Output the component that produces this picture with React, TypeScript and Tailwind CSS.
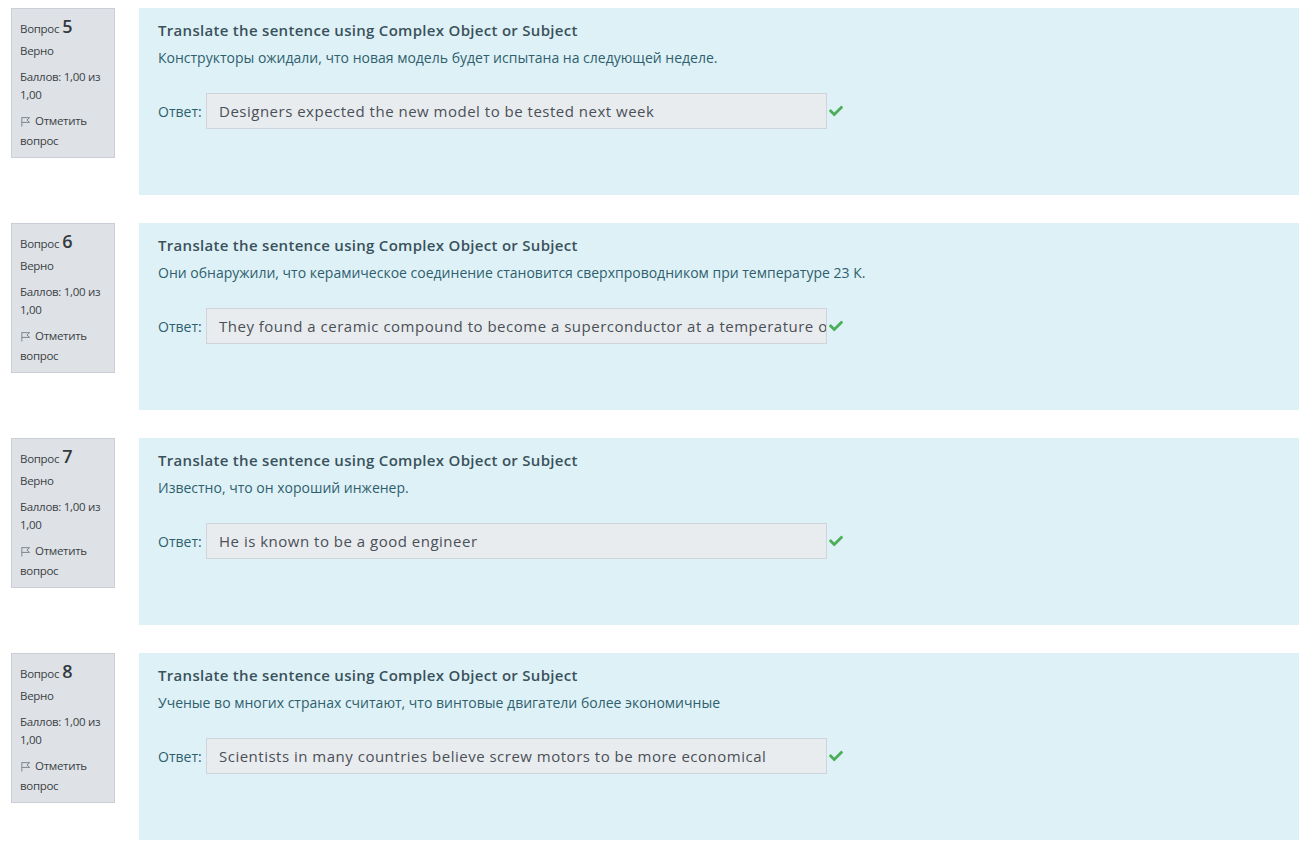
import { FaCheck } from "react-icons/fa";

type Q = { num: number; text: string; answer: string };

const questions: Q[] = [
  {
    num: 5,
    text: "Конструкторы ожидали, что новая модель будет испытана на следующей неделе.",
    answer: "Designers expected the new model to be tested next week",
  },
  {
    num: 6,
    text: "Они обнаружили, что керамическое соединение становится сверхпроводником при температуре 23 К.",
    answer: "They found a ceramic compound to become a superconductor at a temperature of 23 K",
  },
  {
    num: 7,
    text: "Известно, что он хороший инженер.",
    answer: "He is known to be a good engineer",
  },
  {
    num: 8,
    text: "Ученые во многих странах считают, что винтовые двигатели более экономичные",
    answer: "Scientists in many countries believe screw motors to be more economical",
  },
];

function FlagIcon() {
  return (
    <svg viewBox="0 0 12 12" className="h-[11px] w-[11px] text-[#6b7379]" fill="none" stroke="currentColor" strokeWidth="0.9">
      <path d="M2 1.5v10" />
      <path d="M2 1.8h8.5l-3 2.6 3 2.6H2" />
    </svg>
  );
}

function Question({ q }: { q: Q }) {
  return (
    <div className="flex gap-[24px] pl-[11px] pb-[28px]">
      {/* Info */}
      <div className="w-[104px] shrink-0 self-start border border-[#c9cfd4] bg-[#dee2e6] px-[8px] pt-[5px] pb-[7px] text-[11.5px] leading-[18px] tracking-[-0.3px] text-[#3a3f44]">
        <div className="flex items-baseline gap-[3px]">
          <span>Вопрос</span>
          <span className="text-[18px] font-semibold leading-[24px] tracking-normal text-[#343a40]">{q.num}</span>
        </div>
        <div className="mt-[4px]">Верно</div>
        <div className="mt-[8px]">Баллов: 1,00 из 1,00</div>
        <div className="mt-[8px]">
          <span className="inline-flex items-center gap-[4px]">
            <FlagIcon />
            Отметить
          </span>{" "}
          вопрос
        </div>
      </div>

      {/* Content */}
      <div className="h-[187px] w-[1160px] bg-[#def1f7] px-[19px] pt-[11px]">
        <div className="text-[15px] font-semibold leading-[22px] tracking-[0.3px] text-[#3a515b]">
          Translate the sentence using Complex Object or Subject
        </div>
        <div className="mt-[7px] text-[14px] leading-[20px] text-[#2f5f6d]">{q.text}</div>
        <div className="mt-[25px] flex items-center">
          <span className="w-[48px] text-[14px] text-[#2f5f6d]">Ответ:</span>
          <div className="flex h-[36px] w-[621px] items-center overflow-hidden whitespace-nowrap border border-[#ced4da] bg-[#e9ecef] px-[12px] text-[15px] tracking-[0.5px] text-[#495057]">
            {q.answer}
          </div>
          <FaCheck className="ml-[2px] h-[14px] w-[14px] text-[#4dae5a]" />
        </div>
      </div>
    </div>
  );
}

export default function App() {
  return (
    <div className="min-h-[848px] w-[1311px] bg-white pt-[8px]" style={{ fontFamily: '"Open Sans", "Noto Sans", sans-serif' }}>
      {questions.map((q) => (
        <Question key={q.num} q={q} />
      ))}
    </div>
  );
}
